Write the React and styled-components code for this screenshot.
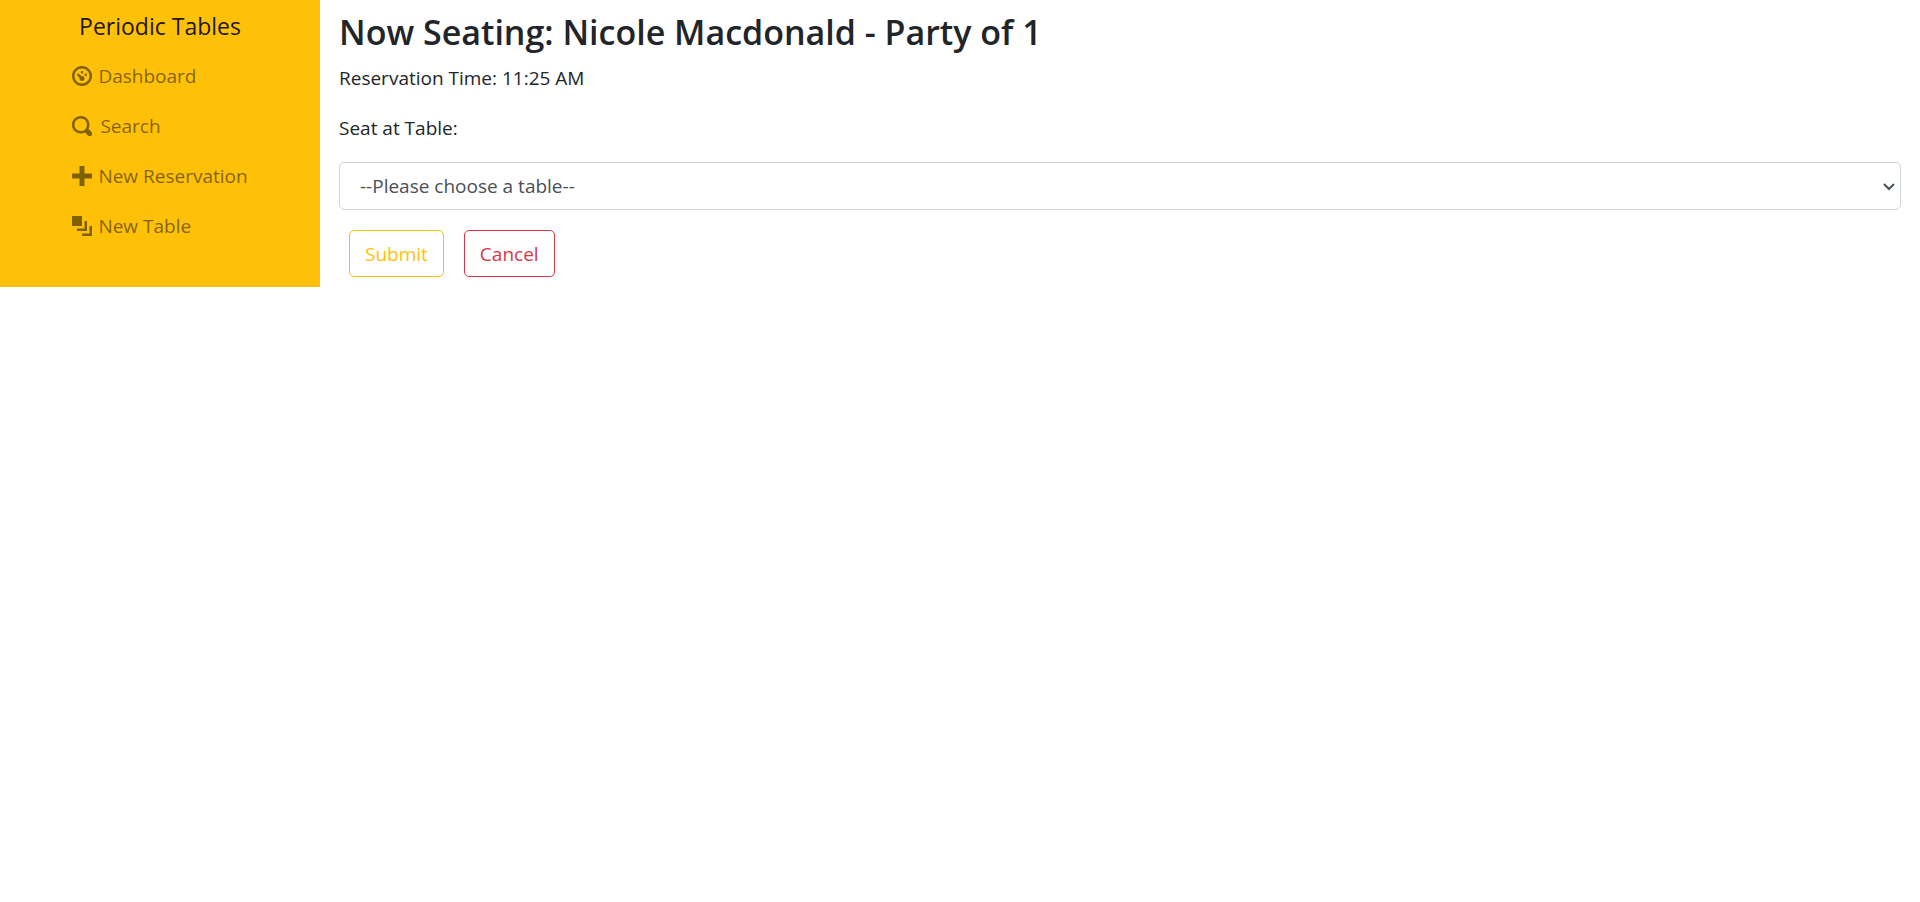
import React from "react";
import styled, { createGlobalStyle } from "styled-components";

const GlobalStyle = createGlobalStyle`
  *, *::before, *::after { box-sizing: border-box; }
  body {
    margin: 0;
    background: #fff;
    color: #212529;
    font-family: "Segoe UI", "Open Sans", "Noto Sans", sans-serif;
    font-size: 19px;
    line-height: 30px;
  }
`;

const Page = styled.div`
  display: grid;
  grid-template-columns: 1fr 5fr;
`;

const Sidebar = styled.nav`
  display: flex;
  flex-direction: column;
  align-items: center;
  background: #ffc107;
`;

const Brand = styled.a`
  padding: 9px 0 7px;
  color: rgba(0, 0, 0, 0.9);
  font-size: 23px;
  line-height: 35px;
  text-decoration: none;
`;

const NavList = styled.ul`
  margin: 0;
  padding: 0;
  list-style: none;
`;

const NavLink = styled.a`
  display: flex;
  align-items: center;
  gap: ${(p) => (p.$wide ? 8 : 6)}px;
  padding: 10px 0;
  color: rgba(0, 0, 0, 0.5);
  text-decoration: none;
  white-space: nowrap;
`;

const Icon = styled.svg`
  width: 20px;
  height: 20px;
  flex: none;
  fill: currentColor;
`;

const Main = styled.main`
  min-width: 0;
  padding: 11px 19px 10px;
`;

const Title = styled.h1`
  margin: 0 0 10px;
  font-size: 34px;
  font-weight: 600;
  line-height: 42px;
`;

const Time = styled.p`
  margin: 0 0 20px;
`;

const Label = styled.label`
  display: block;
  margin-bottom: 19px;
`;

const SelectBox = styled.div`
  position: relative;
`;

const Select = styled.select`
  display: block;
  appearance: none;
  width: 100%;
  height: 48px;
  padding: 8px 20px;
  border: 1px solid #ced4da;
  border-radius: 5px;
  background: #fff;
  color: #495057;
  font: inherit;
`;

const Chevron = styled.svg`
  position: absolute;
  top: 21px;
  right: 6px;
  width: 12px;
  height: 8px;
  fill: none;
  stroke: #495057;
  stroke-width: 2;
  pointer-events: none;
`;

const Actions = styled.div`
  display: flex;
  gap: 20px;
  padding: 20px 10px 0;
`;

const Button = styled.button`
  height: 47px;
  padding: 0 15px;
  border: 1px solid ${(p) => p.$color};
  border-radius: 5px;
  background: transparent;
  color: ${(p) => p.$color};
  font: inherit;
`;

const links = [
  {
    label: "Dashboard",
    path: "M4 0c-2.2 0-4 1.8-4 4s1.8 4 4 4 4-1.8 4-4-1.8-4-4-4zm0 1c1.66 0 3 1.34 3 3s-1.34 3-3 3-3-1.34-3-3 1.34-3 3-3zm0 1c-.28 0-.5.22-.5.5s.22.5.5.5.5-.22.5-.5-.22-.5-.5-.5zm-1.66 1a.5.5 0 0 0-.19.84l.91.91c-.02.08-.06.16-.06.25 0 .55.45 1 1 1s1-.45 1-1-.45-1-1-1c-.09 0-.17.04-.25.06l-.91-.91a.5.5 0 0 0-.44-.16.5.5 0 0 0-.06 0zm3.16 0c-.28 0-.5.22-.5.5s.22.5.5.5.5-.22.5-.5-.22-.5-.5-.5z",
  },
  {
    label: "Search",
    wide: true,
    path: "M3.5 0c-1.93 0-3.5 1.57-3.5 3.5s1.57 3.5 3.5 3.5c.59 0 1.17-.14 1.66-.41a1 1 0 0 0 .13.13l1 1a1.02 1.02 0 1 0 1.44-1.44l-1-1a1 1 0 0 0-.16-.13c.27-.49.44-1.06.44-1.66 0-1.93-1.55-3.5-3.5-3.5zm0 1c1.39 0 2.5 1.11 2.5 2.5 0 .66-.24 1.27-.66 1.72-.01.01-.02.02-.03.03a1 1 0 0 0-.13.13c-.44.4-1.04.63-1.69.63-1.39 0-2.5-1.11-2.5-2.5s1.11-2.5 2.5-2.5z",
  },
  { label: "New Reservation", path: "M3 0v3h-3v2h3v3h2v-3h3v-2h-3v-3h-2z" },
  {
    label: "New Table",
    path: "M0 0v4h4v-4h-4zm5 2v3h-3v1h4v-4h-1zm2 2v3h-3v1h4v-4h-1z",
  },
];

export default function App() {
  return (
    <>
      <GlobalStyle />
      <Page>
        <Sidebar>
          <Brand href="#">Periodic Tables</Brand>
          <NavList>
            {links.map((link) => (
              <li key={link.label}>
                <NavLink href="#" $wide={link.wide}>
                  <Icon viewBox="0 0 8 8" aria-hidden="true">
                    <path d={link.path} />
                  </Icon>
                  {link.label}
                </NavLink>
              </li>
            ))}
          </NavList>
        </Sidebar>
        <Main>
          <Title>Now Seating: Nicole Macdonald - Party of 1</Title>
          <Time>Reservation Time: 11:25 AM</Time>
          <form onSubmit={(e) => e.preventDefault()}>
            <Label htmlFor="table">Seat at Table:</Label>
            <SelectBox>
              <Select id="table" name="table" defaultValue="">
                <option value="">--Please choose a table--</option>
              </Select>
              <Chevron viewBox="0 0 12 8" aria-hidden="true">
                <path d="M1 1l5 5 5-5" />
              </Chevron>
            </SelectBox>
            <Actions>
              <Button type="submit" $color="#ffc107">Submit</Button>
              <Button type="button" $color="#dc3545">Cancel</Button>
            </Actions>
          </form>
        </Main>
      </Page>
    </>
  );
}
